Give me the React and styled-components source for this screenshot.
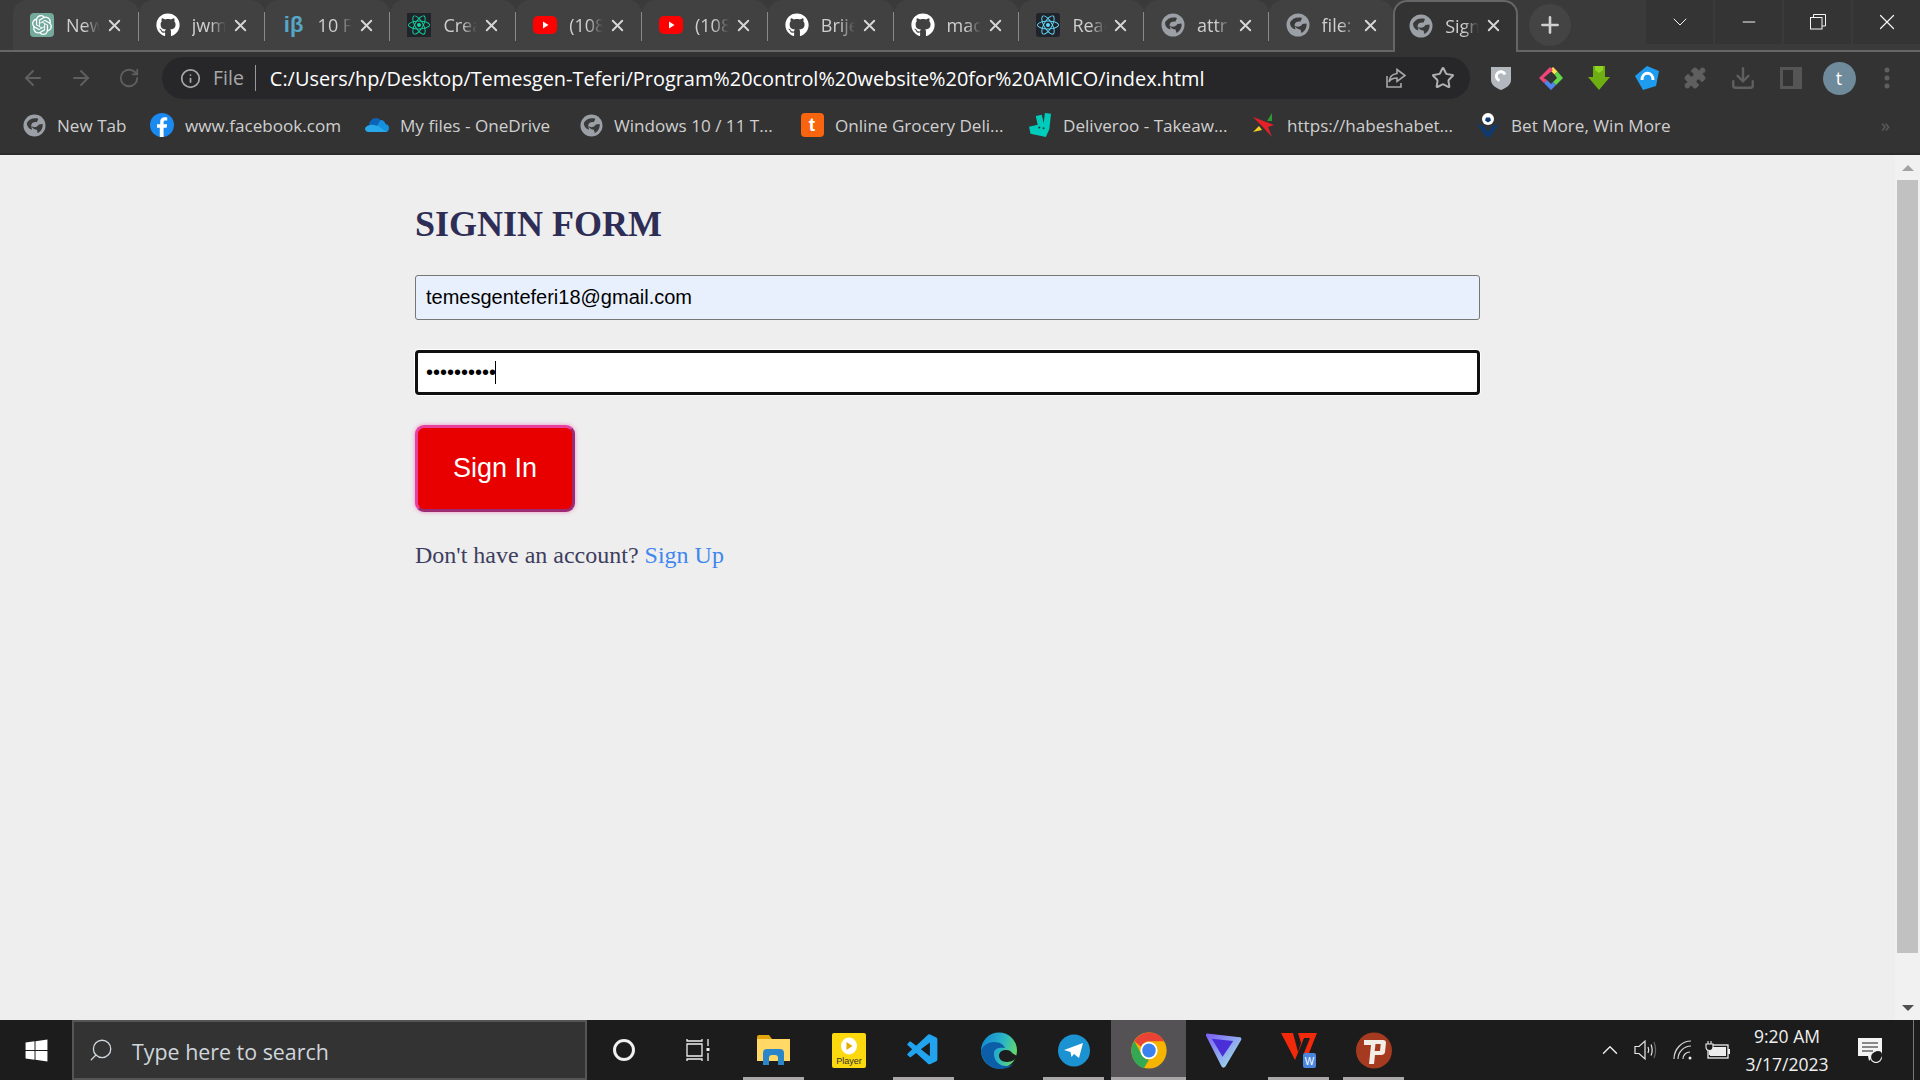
import styled, { createGlobalStyle } from "styled-components";
import { ArrowLeft, ArrowRight, RotateCw, Info, Star, Puzzle, Download, Plus, X, ChevronDown, ChevronUp, Minus, Search } from "lucide-react";
import { FaGithub, FaReact, FaWindows } from "react-icons/fa";
import { SiOpenai, SiDeliveroo } from "react-icons/si";
import { VscVscode } from "react-icons/vsc";

const GlobalStyle = createGlobalStyle`
  html, body { margin: 0; padding: 0; overflow: hidden; }
  * { box-sizing: border-box; }
`;

const UI_FONT = `"Open Sans", "Noto Sans", sans-serif`;

const Screen = styled.div`
  display: flex;
  flex-direction: column;
  height: 100vh;
  width: 1920px;
  background: #eee;
  font-family: ${UI_FONT};
`;

/* browser chrome */
const TabStrip = styled.div`
  display: flex;
  height: 52px;
  padding-left: 13px;
  background: #3a3a3a;
  border-bottom: 2px solid #666;
`;

const Tab = styled.div`
  display: flex;
  align-items: center;
  position: relative;
  flex: 0 0 125.8px;
  height: ${(p) => (p.$active ? "52px" : "50px")};
  padding-left: ${(p) => (p.$active ? "14px" : "17px")};
  padding-bottom: ${(p) => (p.$active ? "3px" : "0")};
  color: #cfcfcf;
  background: ${(p) => (p.$active ? "#333" : "#414141")};
  border-radius: 14px 14px 0 0;
  border: ${(p) => (p.$active ? "2px solid #666" : "none")};
  border-bottom: none;
  &:nth-child(n + 9) {
    flex-basis: 124.6px;
  }
  &::after {
    content: "";
    display: ${(p) => (p.$noSep ? "none" : "block")};
    position: absolute;
    right: 0;
    top: 12px;
    height: 29px;
    width: 1px;
    background: #8a8a8a;
  }
`;

const TabIcon = styled.span`
  display: flex;
  align-items: center;
  justify-content: center;
  flex: 0 0 24px;
  height: 24px;
  color: #fff;
`;

const TabLabel = styled.span`
  width: 34px;
  margin-left: 12px;
  font-size: 18px;
  overflow: hidden;
  white-space: nowrap;
  -webkit-mask-image: linear-gradient(to right, #000 55%, transparent 100%);
  mask-image: linear-gradient(to right, #000 55%, transparent 100%);
`;

const TabClose = styled(X)`
  margin-left: 5px;
  color: #d6d6d6;
`;

const NewTab = styled.div`
  display: flex;
  align-items: center;
  justify-content: center;
  width: 42px;
  height: 42px;
  margin: 4px 0 0 11px;
  border-radius: 50%;
  background: #444;
  color: #d0d0d0;
`;

const WindowControls = styled.div`
  display: flex;
  gap: 2px;
  margin-left: auto;
  height: 44px;
`;

const WindowButton = styled.div`
  display: flex;
  align-items: center;
  justify-content: center;
  width: 67px;
  background: #343434;
  color: #f4f4f4;
`;

const Toolbar = styled.div`
  display: flex;
  align-items: flex-start;
  height: 51px;
  padding: 5px 0 0 9px;
  background: #333;
`;

const ToolCell = styled.div`
  display: flex;
  align-items: center;
  justify-content: center;
  flex: 0 0 48px;
  height: 42px;
  margin-right: ${(p) => p.$after || 0}px;
  color: ${(p) => p.$color || "#5f5f5f"};
`;

const AddressBar = styled.div`
  display: flex;
  align-items: center;
  flex: 0 0 1308px;
  height: 42px;
  margin: 0 7px 0 9px;
  padding: 0 3px 0 18px;
  border-radius: 21px;
  background: #272729;
`;

const Scheme = styled.span`
  margin-left: 12px;
  padding-right: 11px;
  border-right: 1px solid #999;
  font-size: 19.5px;
  line-height: 26px;
  color: #a8a8a8;
`;

const Url = styled.span`
  margin-left: 14px;
  font-size: 19.9px;
  color: #fff;
  white-space: nowrap;
`;

const AddressActions = styled.div`
  display: flex;
  margin-left: auto;
`;

const Avatar = styled.div`
  display: flex;
  align-items: center;
  justify-content: center;
  width: 33px;
  height: 33px;
  border-radius: 50%;
  background: #6f8a9b;
  color: #fff;
  font-size: 18px;
`;

const BookmarkBar = styled.div`
  display: flex;
  align-items: center;
  height: 52px;
  padding: 0 0 6px 22px;
  background: #333;
  border-bottom: 2px solid #2b2b2b;
  color: #cfcfcf;
`;

const Bookmark = styled.div`
  display: flex;
  align-items: center;
  flex: 0 0 ${(p) => p.$width}px;
  font-size: 17.1px;
  white-space: nowrap;
`;

const BookmarkIcon = styled.span`
  display: flex;
  align-items: center;
  justify-content: center;
  flex: 0 0 24px;
  height: 24px;
  margin-right: 11px;
`;

const BookmarkMore = styled.span`
  margin-left: auto;
  padding-right: 30px;
  font-size: 18px;
  color: #5e5e5e;
`;

const LetterIcon = styled.span`
  display: flex;
  align-items: center;
  justify-content: center;
  width: 23px;
  height: 24px;
  border-radius: 4px;
  background: #f9650f;
  color: #fff;
  font: bold 19px "Liberation Sans", sans-serif;
`;

const BetaIcon = styled.span`
  color: #56a6c6;
  font: bold 22px "Liberation Sans", sans-serif;
  white-space: nowrap;
`;

const SquareIcon = styled.span`
  display: flex;
  align-items: center;
  justify-content: center;
  width: 24px;
  height: 24px;
  background: ${(p) => p.$bg};
  color: ${(p) => p.$color};
  border-radius: ${(p) => p.$radius || 0}px;
`;

/* page */
const Viewport = styled.div`
  display: flex;
  flex: 1;
  min-height: 0;
`;

const Page = styled.main`
  flex: 1;
  padding: 51px 0 0 415px;
  background: #eee;
`;

const Form = styled.form`
  display: flex;
  flex-direction: column;
  align-items: flex-start;
  width: 1065px;
  font-family: "Liberation Serif", serif;
`;

const Title = styled.h1`
  margin: 0 0 33px;
  font-size: 36px;
  line-height: 36px;
  font-weight: bold;
  color: #2d2d55;
`;

const EmailInput = styled.input`
  width: 100%;
  height: 45px;
  margin-bottom: 30px;
  padding: 0 10px;
  border: 1px solid #767676;
  border-radius: 3px;
  background: #e8f0fe;
  color: #000;
  font: 20px "Liberation Sans", sans-serif;
  outline: none;
`;

const PasswordWrap = styled.div`
  position: relative;
  width: 100%;
  margin-bottom: 30px;
`;

const PasswordInput = styled.input`
  display: block;
  width: 100%;
  height: 45px;
  padding: 0 8px;
  border: 3px solid #101010;
  border-radius: 4px;
  background: #fff;
  box-shadow: 0 0 0 1px #fff;
  color: #000;
  font: 20px "Liberation Sans", sans-serif;
  outline: none;
`;

const Caret = styled.span`
  position: absolute;
  left: 80px;
  top: 11px;
  width: 1px;
  height: 23px;
  background: #000;
`;

const SubmitButton = styled.button`
  width: 160px;
  height: 87px;
  margin-bottom: 29px;
  border: 3px solid;
  border-color: #e8409f #9c2a72 #9c2a72 #e8409f;
  border-radius: 9px;
  background: #e80000;
  box-shadow: 0 0 4px rgba(232, 64, 159, 0.55);
  color: #fff;
  font: 27px "Liberation Sans", sans-serif;
`;

const Prompt = styled.p`
  margin: 0;
  font-size: 24px;
  line-height: 28px;
  color: #3e3e5e;
`;

const SignUpLink = styled.a`
  color: #3f86ee;
`;

const Scrollbar = styled.div`
  display: flex;
  flex-direction: column;
  align-items: center;
  flex: 0 0 25px;
  background: #f1f1f1;
`;

const ArrowBox = styled.div`
  display: flex;
  align-items: center;
  justify-content: center;
  height: ${(p) => p.$height}px;
  padding-top: ${(p) => p.$top || 0}px;
  &::before {
    content: "";
    border-left: 6px solid transparent;
    border-right: 6px solid transparent;
    border-${(p) => (p.$down ? "top" : "bottom")}: 6px solid ${(p) => (p.$down ? "#505050" : "#a3a3a3")};
  }
`;

const ScrollThumb = styled.div`
  width: 21px;
  height: 773px;
  background: #c1c1c1;
`;

/* taskbar */
const Taskbar = styled.footer`
  display: flex;
  align-items: stretch;
  flex: 0 0 60px;
  background: #1c1c1c;
  color: #fff;
`;

const StartCell = styled.div`
  display: flex;
  align-items: center;
  justify-content: center;
  flex: 0 0 72px;
  color: #fff;
`;

const SearchBox = styled.div`
  display: flex;
  align-items: center;
  flex: 0 0 515px;
  padding: 3px 0 0 14px;
  background: #333;
  border: 2px solid #555;
  color: #cfd6dc;
  font-size: 21.4px;
`;

const SearchIcon = styled(Search)`
  transform: scaleX(-1);
  margin: -3px 18px 0 0;
`;

const TaskCell = styled.div`
  display: flex;
  align-items: center;
  justify-content: center;
  position: relative;
  flex: 0 0 ${(p) => p.$width || 75}px;
  background: ${(p) => (p.$focused ? "#545254" : "transparent")};
  &::after {
    content: "";
    display: ${(p) => (p.$running ? "block" : "none")};
    position: absolute;
    left: ${(p) => (p.$focused ? 0 : 7)}px;
    right: ${(p) => (p.$focused ? 0 : 7)}px;
    bottom: 0;
    height: 3px;
    background: #a9a7a7;
  }
`;

const Tray = styled.div`
  display: grid;
  grid-template-columns: 36px 36px 38px 32px 106px 60px 20px;
  margin-left: auto;
  align-items: center;
  justify-items: center;
  height: 100%;
`;

const Clock = styled.div`
  text-align: center;
  font-size: 17.5px;
  line-height: 28px;
  color: #f0f0f0;
  white-space: nowrap;
`;

const DesktopPeek = styled.span`
  justify-self: start;
  margin-left: 13px;
  width: 1px;
  height: 60px;
  background: #777;
`;

const Globe = ({ size = 24 }) => (
  <svg width={size} height={size} viewBox="0 0 24 24">
    <circle cx="12" cy="12" r="11.5" fill="#9aa0a6" />
    <path d="M4 9.500C6 5.500 11 3.500 16 5l-1.500 3.500c-3-.5-5.500.5-6 3.500l1 4.500-2.500-1C5 14 4 12 4 9.500Z" fill="#3a3a3a" />
    <path d="M8.500 12.500c3 2 6 1.500 8-1.500l4-.5c.5 4-1.500 7.500-5 9.500l-1-3.500c-2.500 0-4.500-1.500-6-4Z" fill="#3a3a3a" />
  </svg>
);

const Youtube = () => (
  <svg width="24" height="18" viewBox="0 0 24 18">
    <rect width="24" height="18" rx="5" fill="#f00" />
    <path d="M10 5.500v7l5.500-3.500Z" fill="#fff" />
  </svg>
);

const Facebook = () => (
  <svg width="24" height="24" viewBox="0 0 24 24">
    <circle cx="12" cy="12" r="12" fill="#1b8af0" />
    <path d="M13.600 24v-9.200h3l.5-3.500h-3.500V9.200c0-1 .4-1.700 1.800-1.700h1.800V4.400c-.4 0-1.400-.2-2.600-.2-2.700 0-4.400 1.600-4.400 4.600v2.500H7v3.500h2.800V24Z" fill="#fff" />
  </svg>
);

const OneDrive = () => (
  <svg width="24" height="18" viewBox="0 0 24 18">
    <path d="M9.500 14 15 4c3-.4 5 1.500 5.500 4 2 .3 3.500 2 3.500 4 0 2-1 3-2 4H9Z" fill="#1490df" />
    <path d="M4 9c.3-4 3.500-7 7-7 2 0 3.500 1 4.500 2.200L8 15Z" fill="#0c64b8" />
    <path d="M3 16h19l-9-6-4-1c-1-.2-2.500-.2-4 0-3 .5-5 2-5 4 0 1 1 2.500 3 3Z" fill="#28a8ea" />
  </svg>
);

const HabeshaStar = () => (
  <svg width="24" height="24" viewBox="0 0 24 24">
    <path d="M1 4 22 12 16 14 20 24 10 13Z" fill="#e8202a" />
    <path d="M15 8 20 0 20 8Z" fill="#2c9a35" />
    <path d="M1 19 7 13 10 17Z" fill="#f2cf1e" />
  </svg>
);

const BetBall = () => (
  <svg width="24" height="24" viewBox="0 0 24 24">
    <path d="M1 11 8 13 12 19 16 13 23 11 14 24H10Z" fill="#0e3a70" />
    <circle cx="12" cy="6" r="6" fill="#fff" />
    <path d="M10 4.500h4l1 3-3 2-3-2Z" fill="#0e3a70" />
  </svg>
);

const ShareIcon = () => (
  <svg width="24" height="24" viewBox="0 0 24 24" fill="none" stroke="#a8a8a8" strokeWidth="1.6">
    <path d="M4 10v11h14v-4" />
    <path d="M14 3.500 22 9.500l-8 6V12c-4 0-6.500 1-8 4 .5-5 3.500-8 8-8.500Z" />
  </svg>
);

const ShieldExt = () => (
  <svg width="20" height="24" viewBox="0 0 20 24">
    <path d="M0 1h20v13c0 5-5 8-10 10C5 22 0 19 0 14Z" fill="#b3b8bf" />
    <path d="M14 8.500a4.500 4.500 0 1 0-5.500 6" fill="none" stroke="#fff" strokeWidth="3" />
  </svg>
);

const DiamondExt = () => (
  <svg width="24" height="24" viewBox="0 0 24 24">
    <path d="M14 1 18.500 5.500 15.500 8.500 11 4Z" fill="#ffe14d" />
    <path d="M18.500 5.500 24 12 17 19 14 16 18 12 15.500 8.500Z" fill="#63d548" />
    <path d="M17 19 12 24 5 17 8 14 12 18 14 16Z" fill="#4f86ee" />
    <path d="M5 17 0 12 11 1 14 4 4.500 12 8 14Z" fill="#f0457a" />
  </svg>
);

const ArrowExt = () => (
  <svg width="24" height="24" viewBox="0 0 24 24">
    <path d="M1 11h5V0h12v11h5L12 24Z" fill="#6fae12" />
    <path d="M8 0h8v4l-4 3-4-3Z" fill="#8fd420" />
  </svg>
);

const MagnetExt = () => (
  <svg width="24" height="24" viewBox="0 0 24 24">
    <path d="M12 0 24 5 21 20 8 24 0 10Z" fill="#1e9cf0" />
    <path d="M7 14c0-9 11-9 11 0" fill="none" stroke="#fff" strokeWidth="3" />
  </svg>
);

const SidePanel = () => (
  <svg width="22" height="22" viewBox="0 0 22 22">
    <path d="M0 0h22v22H0Z" fill="#555" />
    <path d="M3 3h10v16H3Z" fill="#333" />
  </svg>
);

const Dots = () => (
  <svg width="6" height="22" viewBox="0 0 6 22" fill="#5f5f5f">
    <circle cx="3" cy="3" r="2.500" />
    <circle cx="3" cy="11" r="2.500" />
    <circle cx="3" cy="19" r="2.500" />
  </svg>
);

const Restore = () => (
  <svg width="16" height="16" viewBox="0 0 16 16" fill="none" stroke="#f4f4f4" strokeWidth="1">
    <rect x="0.5" y="3.500" width="11.500" height="11.500" />
    <path d="M3.500 3.500V.5h12v11.500h-3.500" />
  </svg>
);

const TaskView = () => (
  <svg width="26" height="24" viewBox="0 0 26 24" fill="none" stroke="#f0f0f0" strokeWidth="1.300">
    <path d="M1 1v2h15V1M1 6h15v12H1ZM1 23v-2h15v2" />
    <path d="M22 1v7M22 15v8" />
    <rect x="20.500" y="10" width="3" height="3" fill="#f0f0f0" stroke="none" />
  </svg>
);

const Folder = () => (
  <svg width="33" height="30" viewBox="0 0 33 30">
    <path d="M0 2a2 2 0 0 1 2-2h10l3 4H0Z" fill="#e2a50e" />
    <path d="M0 4h33v22H0Z" fill="#ffd866" />
    <path d="M6 30V18a4 4 0 0 1 4-4h13a4 4 0 0 1 4 4v12h-6v-7a3 3 0 0 0-3-3h-3a3 3 0 0 0-3 3v7Z" fill="#2a86c8" />
  </svg>
);

const PlayerIcon = () => (
  <svg width="34" height="35" viewBox="0 0 34 35">
    <rect width="34" height="35" rx="2" fill="#fcd80f" />
    <ellipse cx="17" cy="13" rx="8" ry="8.500" fill="#fff" />
    <path d="M14.500 9v8l6-4Z" fill="#e0ac00" />
    <text x="17" y="31" textAnchor="middle" fontSize="9" fontFamily="Liberation Sans" fill="#333">Player</text>
  </svg>
);

const Edge = () => (
  <svg width="36" height="37" viewBox="0 0 36 37">
    <defs>
      <linearGradient id="edgeRing" x1="0" y1="0.2" x2="1" y2="0.5">
        <stop offset="0" stopColor="#1287d6" />
        <stop offset="0.6" stopColor="#2bb7c4" />
        <stop offset="1" stopColor="#66d86a" />
      </linearGradient>
    </defs>
    <circle cx="18" cy="18.500" r="18" fill="url(#edgeRing)" />
    <path d="M13 20c-1 8 5 14 12 14 4 0 7-1 9-4-3 5-9 7-15 7C9 37 1 29 0 19c2-6 8-9 13-9 6 0 10 3 11 6-5-1-10 0-11 4Z" fill="#0d5ea8" />
    <path d="M36 24c-1 3-5 6-10 6-5 0-8-3-8-6 0-4 3-6 7-6 3 0 5 1 6 3Z" fill="#1c1c1c" />
  </svg>
);

const TelegramIcon = () => (
  <svg width="32" height="33" viewBox="0 0 32 33">
    <circle cx="16" cy="16.500" r="16" fill="#1b92d1" />
    <path d="M6 16 25 9l-4 15-5-4-2.500 3-1-5Z" fill="#fff" />
  </svg>
);

const Chrome = () => (
  <svg width="36" height="37" viewBox="0 0 48 48" preserveAspectRatio="none">
    <circle cx="24" cy="24" r="23.500" fill="#f4b400" />
    <path d="M24 .5a23.500 23.500 0 0 1 20.500 11.500H24a12 12 0 0 0-10.500 7L4.500 12A23.500 23.500 0 0 1 24 .5Z" fill="#ea4335" />
    <path d="M4.500 12 14 29a12 12 0 0 0 10 7L17 47C7 44 .5 35 .5 24c0-4.500 1.500-8.500 4-12Z" fill="#34a853" />
    <circle cx="24" cy="24" r="11.500" fill="#fff" />
    <circle cx="24" cy="24" r="9" fill="#3b82ee" />
  </svg>
);

const Proton = () => (
  <svg width="36" height="36" viewBox="0 0 37 48" preserveAspectRatio="none">
    <defs>
      <linearGradient id="protonBody" x1="0" y1="0" x2="1" y2="1">
        <stop offset="0" stopColor="#7a5cf5" />
        <stop offset="1" stopColor="#a3f0e8" />
      </linearGradient>
    </defs>
    <path d="M1 2 35 7c1 0 2 2 1 4L20 46c-1 2-3 2-4 0L0 5c0-2 0-3 1-3Z" fill="url(#protonBody)" />
    <path d="M6 9 28 12 17 33Z" fill="#4a2fd8" />
  </svg>
);

const Wps = () => (
  <svg width="36" height="36" viewBox="0 0 36 36">
    <path d="M0 1h12l5 19 3-9-3-10h19L28 21h-5l6-15h-6L14 28Z" fill="#f02a0a" />
    <rect x="22" y="21" width="13" height="15" rx="2" fill="#4a86e0" />
    <text x="28.500" y="33" textAnchor="middle" fontSize="10" fontFamily="Liberation Sans" fill="#fff">W</text>
  </svg>
);

const Psiphon = () => (
  <svg width="36" height="37" viewBox="0 0 36 37">
    <circle cx="18" cy="18.500" r="18" fill="#a63a20" />
    <path fillRule="evenodd" d="M8 8h19c2 0 3 1 3 3l-1 9c0 2-2 3-4 3h-6l-1 9h-5l2-19H8ZM19.500 12l-.8 7H24l.7-7Z" fill="#f2ede6" />
  </svg>
);

const Speaker = () => (
  <svg width="24" height="24" viewBox="0 0 24 24" fill="none" stroke="#e8e8e8" strokeWidth="1.200">
    <path d="M1 8.500h4L11 3v18l-6-5.500H1Z" />
    <path d="M14 9c1 2 1 4 0 6M17 6.500c1.500 3.500 1.500 7.500 0 11" />
    <path d="M20 4c2 5 2 11 0 16" stroke="#666" />
  </svg>
);

const Wifi = () => (
  <svg width="20" height="20" viewBox="0 0 20 20" fill="none" stroke="#d8d8d8" strokeWidth="1.200">
    <path d="M1 19C1 9 9 1 18 1" />
    <path d="M5 19c0-7 6-13 13-13" />
    <path d="M10 19c0-4 3-7 7-7" />
    <circle cx="17" cy="18" r="1.500" fill="#eee" stroke="none" />
  </svg>
);

const Battery = () => (
  <svg width="26" height="20" viewBox="0 0 26 20">
    <rect x="3" y="5" width="20" height="13" fill="none" stroke="#eee" strokeWidth="1.300" />
    <rect x="5" y="7" width="16" height="9" fill="#eee" />
    <rect x="23" y="9" width="2" height="5" fill="#eee" />
    <path d="M1 4h7v3a3 3 0 0 1-7 0ZM3 1v3M6 1v3M4.500 10v5" fill="#1c1c1c" stroke="#eee" strokeWidth="1.100" />
  </svg>
);

const Notification = () => (
  <svg width="26" height="26" viewBox="0 0 26 26">
    <path d="M1 1h24v18H16l-4 5-1-5H1Z" fill="#f4f4f4" />
    <path d="M5 6h16M5 10h16M5 14h11" stroke="#1c1c1c" strokeWidth="1.200" />
    <circle cx="19" cy="20" r="5.500" fill="#1c1c1c" stroke="#f4f4f4" strokeWidth="1.200" />
    <circle cx="21" cy="18" r="4" fill="#1c1c1c" />
  </svg>
);

const tabs = [
  { label: "New Tab", icon: <SquareIcon $bg="#74aa9c" $color="#fff" $radius={4}><SiOpenai size={20} /></SquareIcon> },
  { label: "jwm", icon: <FaGithub size={24} color="#fff" /> },
  { label: "10 Free", icon: <BetaIcon>iβ</BetaIcon> },
  { label: "Create", icon: <SquareIcon $bg="#20232a" $color="#0fd6a0"><FaReact size={22} /></SquareIcon> },
  { label: "(108)", icon: <Youtube /> },
  { label: "(108)", icon: <Youtube /> },
  { label: "Brije", icon: <FaGithub size={24} color="#fff" /> },
  { label: "mac", icon: <FaGithub size={24} color="#fff" /> },
  { label: "React", icon: <SquareIcon $bg="#20232a" $color="#61dafb" $radius={3}><FaReact size={22} /></SquareIcon> },
  { label: "attr", icon: <Globe /> },
  { label: "file:", icon: <Globe /> },
  { label: "Signin", icon: <Globe />, active: true },
];

const bookmarks = [
  { label: "New Tab", width: 128, icon: <Globe size={23} /> },
  { label: "www.facebook.com", width: 215, icon: <Facebook /> },
  { label: "My files - OneDrive", width: 214, icon: <OneDrive /> },
  { label: "Windows 10 / 11 T...", width: 221, icon: <Globe size={23} /> },
  { label: "Online Grocery Deli...", width: 228, icon: <LetterIcon>t</LetterIcon> },
  { label: "Deliveroo - Takeaw...", width: 224, icon: <SiDeliveroo size={24} color="#00ccbc" /> },
  { label: "https://habeshabet...", width: 224, icon: <HabeshaStar /> },
  { label: "Bet More, Win More", width: 260, icon: <BetBall /> },
];

const taskApps = [
  { icon: <Folder />, running: true },
  { icon: <PlayerIcon /> },
  { icon: <VscVscode size={37} color="#22a3ee" />, running: true },
  { icon: <Edge /> },
  { icon: <TelegramIcon />, running: true },
  { icon: <Chrome />, running: true, focused: true },
  { icon: <Proton /> },
  { icon: <Wps />, running: true },
  { icon: <Psiphon />, running: true },
];

const App = () => {
  return (
    <Screen>
      <GlobalStyle />
      <TabStrip>
        {tabs.map((tab, i) => (
          <Tab key={i} $active={tab.active} $noSep={tab.active || i === 10}>
            <TabIcon>{tab.icon}</TabIcon>
            <TabLabel>{tab.label}</TabLabel>
            <TabClose size={19} strokeWidth={2.4} />
          </Tab>
        ))}
        <NewTab><Plus size={26} strokeWidth={2.4} /></NewTab>
        <WindowControls>
          <WindowButton><ChevronDown size={24} strokeWidth={1} /></WindowButton>
          <WindowButton><Minus size={20} strokeWidth={1.2} /></WindowButton>
          <WindowButton><Restore /></WindowButton>
          <WindowButton><X size={26} strokeWidth={1.1} /></WindowButton>
        </WindowControls>
      </TabStrip>

      <Toolbar>
        <ToolCell><ArrowLeft size={24} strokeWidth={2} /></ToolCell>
        <ToolCell><ArrowRight size={24} strokeWidth={2} /></ToolCell>
        <ToolCell><RotateCw size={22} strokeWidth={2} /></ToolCell>
        <AddressBar>
          <Info size={21} color="#a8a8a8" strokeWidth={2} />
          <Scheme>File</Scheme>
          <Url>C:/Users/hp/Desktop/Temesgen-Teferi/Program%20control%20website%20for%20AMICO/index.html</Url>
          <AddressActions>
            <ToolCell><ShareIcon /></ToolCell>
            <ToolCell $color="#b0b0b0"><Star size={24} strokeWidth={2} /></ToolCell>
          </AddressActions>
        </AddressBar>
        <ToolCell $after={2}><ShieldExt /></ToolCell>
        <ToolCell><DiamondExt /></ToolCell>
        <ToolCell><ArrowExt /></ToolCell>
        <ToolCell><MagnetExt /></ToolCell>
        <ToolCell><Puzzle size={24} fill="#5f5f5f" strokeWidth={1} /></ToolCell>
        <ToolCell><Download size={26} strokeWidth={2.2} /></ToolCell>
        <ToolCell><SidePanel /></ToolCell>
        <ToolCell><Avatar>t</Avatar></ToolCell>
        <ToolCell><Dots /></ToolCell>
      </Toolbar>

      <BookmarkBar>
        {bookmarks.map((mark) => (
          <Bookmark key={mark.label} $width={mark.width}>
            <BookmarkIcon>{mark.icon}</BookmarkIcon>
            {mark.label}
          </Bookmark>
        ))}
        <BookmarkMore>»</BookmarkMore>
      </BookmarkBar>

      <Viewport>
        <Page>
          <Form onSubmit={(e) => e.preventDefault()}>
            <Title>SIGNIN FORM</Title>
            <EmailInput type="email" defaultValue="temesgenteferi18@gmail.com" />
            <PasswordWrap>
              <PasswordInput type="password" defaultValue="1234567890" />
              <Caret />
            </PasswordWrap>
            <SubmitButton type="submit">Sign In</SubmitButton>
            <Prompt>
              Don't have an account? <SignUpLink>Sign Up</SignUpLink>
            </Prompt>
          </Form>
        </Page>
        <Scrollbar>
          <ArrowBox $height={25} />
          <ScrollThumb />
          <ArrowBox $height={67} $top={43} $down />
        </Scrollbar>
      </Viewport>

      <Taskbar>
        <StartCell><FaWindows size={25} /></StartCell>
        <SearchBox>
          <SearchIcon size={26} strokeWidth={1.2} />
          Type here to search
        </SearchBox>
        <TaskCell $width={74}>
          <svg width="24" height="24" viewBox="0 0 24 24">
            <circle cx="12" cy="12" r="9.500" fill="none" stroke="#f0f0f0" strokeWidth="3" />
          </svg>
        </TaskCell>
        <TaskCell><TaskView /></TaskCell>
        {taskApps.map((app, i) => (
          <TaskCell key={i} $running={app.running} $focused={app.focused}>
            {app.icon}
          </TaskCell>
        ))}
        <Tray>
          <ChevronUp size={26} strokeWidth={1.3} color="#eee" />
          <Speaker />
          <Wifi />
          <Battery />
          <Clock>
            9:20 AM
            <br />
            3/17/2023
          </Clock>
          <Notification />
          <DesktopPeek />
        </Tray>
      </Taskbar>
    </Screen>
  );
};

export default App;
